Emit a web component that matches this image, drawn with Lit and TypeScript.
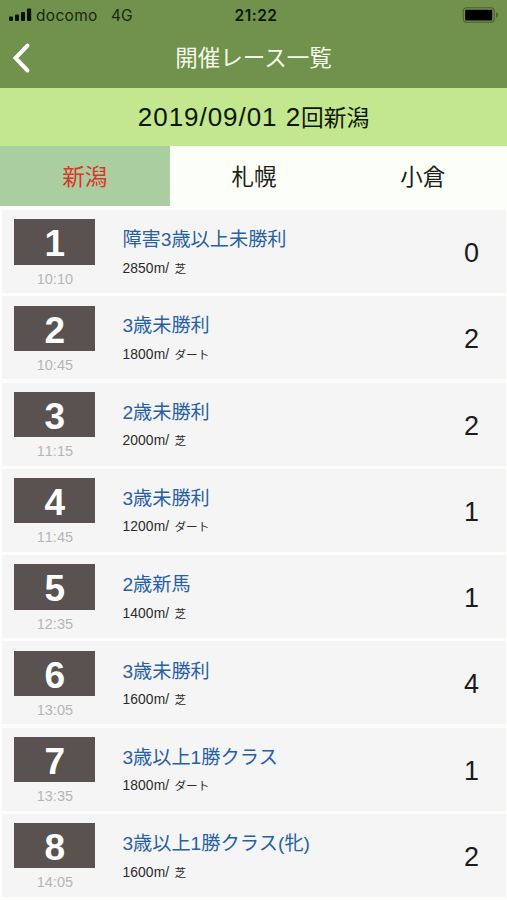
import { LitElement, html, css } from "lit";
import { customElement, property } from "lit/decorators.js";

interface Race {
  no: number;
  time: string;
  name: string;
  distance: string;
  course: string;
  count: number;
}

const races: Race[] = [
  { no: 1, time: "10:10", name: "障害3歳以上未勝利", distance: "2850m/", course: "芝", count: 0 },
  { no: 2, time: "10:45", name: "3歳未勝利", distance: "1800m/", course: "ダート", count: 2 },
  { no: 3, time: "11:15", name: "2歳未勝利", distance: "2000m/", course: "芝", count: 2 },
  { no: 4, time: "11:45", name: "3歳未勝利", distance: "1200m/", course: "ダート", count: 1 },
  { no: 5, time: "12:35", name: "2歳新馬", distance: "1400m/", course: "芝", count: 1 },
  { no: 6, time: "13:05", name: "3歳未勝利", distance: "1600m/", course: "芝", count: 4 },
  { no: 7, time: "13:35", name: "3歳以上1勝クラス", distance: "1800m/", course: "ダート", count: 1 },
  { no: 8, time: "14:05", name: "3歳以上1勝クラス(牝)", distance: "1600m/", course: "芝", count: 2 },
];

@customElement("race-row")
export class RaceRow extends LitElement {
  @property({ attribute: false }) race!: Race;

  static styles = css`
    :host {
      display: grid;
      grid-template-columns: 81px 1fr 68px;
      column-gap: 27px;
      height: 83px;
      box-sizing: border-box;
      padding-left: 12.4px;
      background: #f5f5f5;
      font-family: "Liberation Sans", "Noto Sans CJK JP", sans-serif;
      font-kerning: none;
    }
    .slot { padding-top: 9.3px; text-align: center; }
    .badge {
      height: 45.3px;
      background: #595251;
      color: #fff;
      font: bold 37px/49px "Liberation Sans", sans-serif;
      font-kerning: none;
    }
    .time {
      margin-top: 6px;
      color: #b5b5b5;
      font: 14.5px/17px "Liberation Sans", sans-serif;
      font-kerning: none;
    }
    .name {
      margin-top: 16.2px;
      height: 28px;
      line-height: 28px;
      font-size: 19.2px;
      color: #2860a4;
      white-space: nowrap;
    }
    .detail {
      display: grid;
      grid-template-columns: 52px auto;
      align-items: baseline;
      margin-top: 4.5px;
      line-height: 20px;
      font-size: 13.8px;
      letter-spacing: 0.15px;
      color: #2b2b2b;
    }
    .course { font-size: 11.7px; letter-spacing: 0; }
    .count {
      text-align: center;
      color: #1c1c1c;
      font: 27px/86px "Liberation Sans", sans-serif;
    }
  `;

  render() {
    const r = this.race;
    return html`
      <div class="slot">
        <div class="badge">${r.no}</div>
        <div class="time">${r.time}</div>
      </div>
      <div>
        <div class="name">${r.name}</div>
        <div class="detail"><span>${r.distance}</span><span class="course">${r.course}</span></div>
      </div>
      <div class="count">${r.count}</div>
    `;
  }
}

@customElement("app-root")
export class AppRoot extends LitElement {
  static styles = css`
    :host {
      display: block;
      height: 900px;
      overflow: hidden;
      background: #fdfefb;
      font-family: Inter, "Noto Sans CJK JP", sans-serif;
    }
    .top { height: 88px; background: #71924c; }
    .status {
      display: grid;
      grid-template-columns: 1fr auto 1fr;
      align-items: center;
      height: 30px;
      padding: 0 8px 0 9px;
      color: #101708;
      font-size: 15.5px;
    }
    .carrier { display: flex; align-items: center; color: #1b2710; }
    .signal { width: 23px; height: 14px; margin-right: 4px; }
    .operator { width: 75px; letter-spacing: 0.3px; }
    .clock {
      padding-left: 4px;
      font-size: 15.5px;
      font-weight: 600;
      letter-spacing: 0.5px;
    }
    .battery { width: 37px; height: 16px; justify-self: end; }
    .nav {
      display: grid;
      grid-template-columns: 50px 1fr 50px;
      align-items: center;
      height: 55px;
      color: #fff;
    }
    .back { width: 20px; height: 32px; margin-left: 11px; }
    .title { text-align: center; font-size: 22.5px; line-height: 32px; color: #f4f8e9; }
    .date {
      display: flex;
      justify-content: center;
      align-items: baseline;
      height: 58px;
      line-height: 58px;
      background: #c2e78f;
      color: #10160b;
      font-size: 26px;
      font-family: "Liberation Sans", "Noto Sans CJK JP", sans-serif;
      white-space: pre;
    }
    .day { letter-spacing: 0.95px; font-kerning: none; }
    .place { font-size: 22.7px; }
    .tabs {
      display: grid;
      grid-template-columns: 169.6px 1fr 1fr;
      grid-template-rows: 60px;
      height: 60px;
      line-height: 61px;
      text-align: center;
      font-size: 22.5px;
      color: #1d1f1b;
      background: #fcfff8;
    }
    .active { background: #aace9f; color: #dc352a; }
    .list {
      display: flex;
      flex-direction: column;
      gap: 3.27px;
      padding: 4px 1.5px 0 2px;
    }
  `;

  render() {
    return html`
      <header class="top">
        <div class="status">
          <div class="carrier">
            <svg class="signal" viewBox="0 0 23 14" fill="#0b1005">
              <rect x="0" y="8.5" width="4" height="4.5" rx="1" />
              <rect x="6" y="6.5" width="4" height="6.5" rx="1" />
              <rect x="12" y="4" width="4" height="9" rx="1" />
              <rect x="18" y="0.5" width="4.2" height="12.5" rx="1" />
            </svg>
            <span class="operator">docomo</span>
            <span>4G</span>
          </div>
          <div class="clock">21:22</div>
          <svg class="battery" viewBox="0 0 37 16">
            <rect x="1.2" y="0.7" width="31" height="14.6" rx="3.5" fill="none" stroke="#496030" stroke-width="1.1" />
            <rect x="3.2" y="2.8" width="27" height="10.6" rx="0.8" fill="#000" />
            <path d="M34 5.2q2.2 1 2.2 2.8t-2.2 2.8z" fill="#496030" />
          </svg>
        </div>
        <div class="nav">
          <svg class="back" viewBox="0 0 20 32" fill="none" stroke="#fff" stroke-width="4">
            <path d="M16.5 3.5L4.5 16L16.5 28.5" stroke-linejoin="miter" stroke-linecap="round" />
          </svg>
          <div class="title">開催レース一覧</div>
        </div>
      </header>
      <div class="date"><span class="day">2019/09/01 2</span><span class="place">回新潟</span></div>
      <nav class="tabs">
        <div class="active">新潟</div>
        <div>札幌</div>
        <div>小倉</div>
      </nav>
      <main class="list">${races.map((r) => html`<race-row .race=${r}></race-row>`)}</main>
    `;
  }
}
